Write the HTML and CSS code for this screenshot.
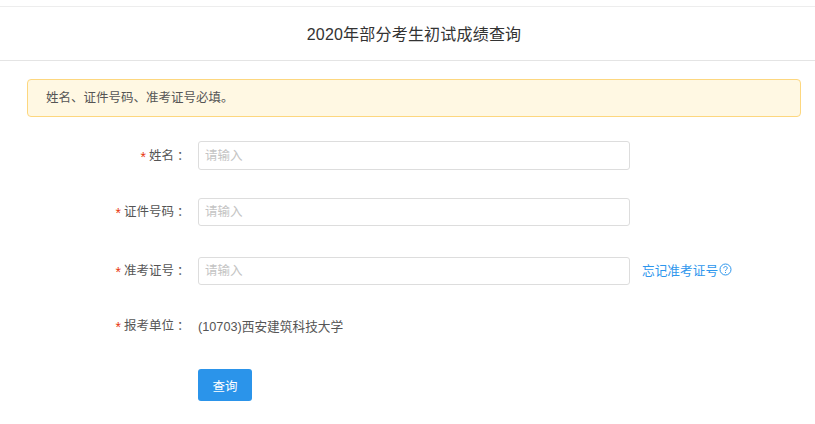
FILE: index.html
```html
<!DOCTYPE html>
<html lang="zh-CN">
<head>
  <meta charset="UTF-8">
  <meta name="viewport" content="width=device-width, initial-scale=1.0">
  <title>2020年部分考生初试成绩查询</title>
  <link rel="stylesheet" href="styles.css">
</head>
<body>
  <div class="page-title">2020年部分考生初试成绩查询</div>
  <div class="notice">姓名、证件号码、准考证号必填。</div>
  <form class="query-form">
    <div class="form-row row-name">
      <label class="form-label"><span class="req">*</span>姓名<span class="colon">：</span></label>
      <input class="form-input" type="text" placeholder="请输入">
    </div>
    <div class="form-row row-id">
      <label class="form-label"><span class="req">*</span>证件号码<span class="colon">：</span></label>
      <input class="form-input" type="text" placeholder="请输入">
    </div>
    <div class="form-row row-exam">
      <label class="form-label"><span class="req">*</span>准考证号<span class="colon">：</span></label>
      <input class="form-input" type="text" placeholder="请输入">
      <a class="forgot" href="#">忘记准考证号<svg class="help-icon" width="13" height="13" viewBox="0 0 13 13" fill="none" stroke="#2d96ed"><circle cx="6.5" cy="6.5" r="5.5"/><path d="M4.7 5.2c0-1 .8-1.7 1.8-1.7s1.8.7 1.8 1.6c0 1.3-1.8 1.4-1.8 2.8"/><path d="M6.5 9v1"/></svg></a>
    </div>
    <div class="form-row row-unit">
      <label class="form-label"><span class="req">*</span>报考单位<span class="colon">：</span></label>
      <span class="form-value">(10703)西安建筑科技大学</span>
    </div>
    <div class="form-row row-submit">
      <button class="submit-btn" type="button">查询</button>
    </div>
  </form>
</body>
</html>
```

FILE: styles.css
```css
body {
  margin: 0;
  padding-top: 6px;
  background: #fff;
  color: #555;
  font-family: "Liberation Sans", "Noto Sans CJK SC", sans-serif;
  font-size: 12.5px;
}
.page-title {
  height: 53px;
  line-height: 55px;
  padding-left: 13px;
  border-top: 1px solid #ededed;
  border-bottom: 1px solid #e4e4e4;
  text-align: center;
  font-size: 16px;
  letter-spacing: 0.2px;
  color: #333;
}
.notice {
  height: 36px;
  line-height: 36px;
  margin: 18px 14px 0 27px;
  padding-left: 18px;
  background: #fff8e3;
  border: 1px solid #fdd77f;
  border-radius: 4px;
  color: #555;
}
.query-form {
  margin-top: 24px;
}
.form-row {
  display: flex;
  align-items: center;
}
.row-id {
  margin-top: 28px;
}
.row-exam {
  margin-top: 31px;
}
.row-unit {
  margin-top: 27px;
  height: 28px;
}
.row-submit {
  margin-top: 29px;
  padding-left: 198px;
}
.form-label {
  flex: none;
  width: 198px;
  padding: 0 8.5px 2px 0;
  box-sizing: border-box;
  text-align: right;
}
.req {
  margin-right: 3px;
  font-size: 14px;
  vertical-align: -2px;
  color: #e8340c;
}
.colon {
  margin-left: 3px;
  font-family: "Noto Sans CJK TC", sans-serif;
}
.form-input {
  width: 432px;
  height: 28px;
  box-sizing: border-box;
  padding: 0 6px;
  background: #fff;
  border: 1px solid #ddd;
  border-radius: 3px;
  font-family: inherit;
  font-size: 12.5px;
  color: #555;
}
.row-name .form-input {
  height: 29px;
}
.form-input::placeholder {
  color: #c4c4c4;
}
.form-value {
  color: #555;
  margin-bottom: 2px;
  font-size: 12.7px;
}
.forgot {
  display: flex;
  align-items: center;
  margin-left: 12px;
  margin-bottom: 4px;
  font-size: 12.7px;
  color: #2d96ed;
  text-decoration: none;
}
.help-icon {
  margin-left: 1px;
}
.submit-btn {
  width: 54px;
  height: 32px;
  padding: 0;
  background: #2b94ea;
  border: none;
  border-radius: 3px;
  color: #fff;
  font-family: inherit;
  font-size: 12.5px;
}
```
